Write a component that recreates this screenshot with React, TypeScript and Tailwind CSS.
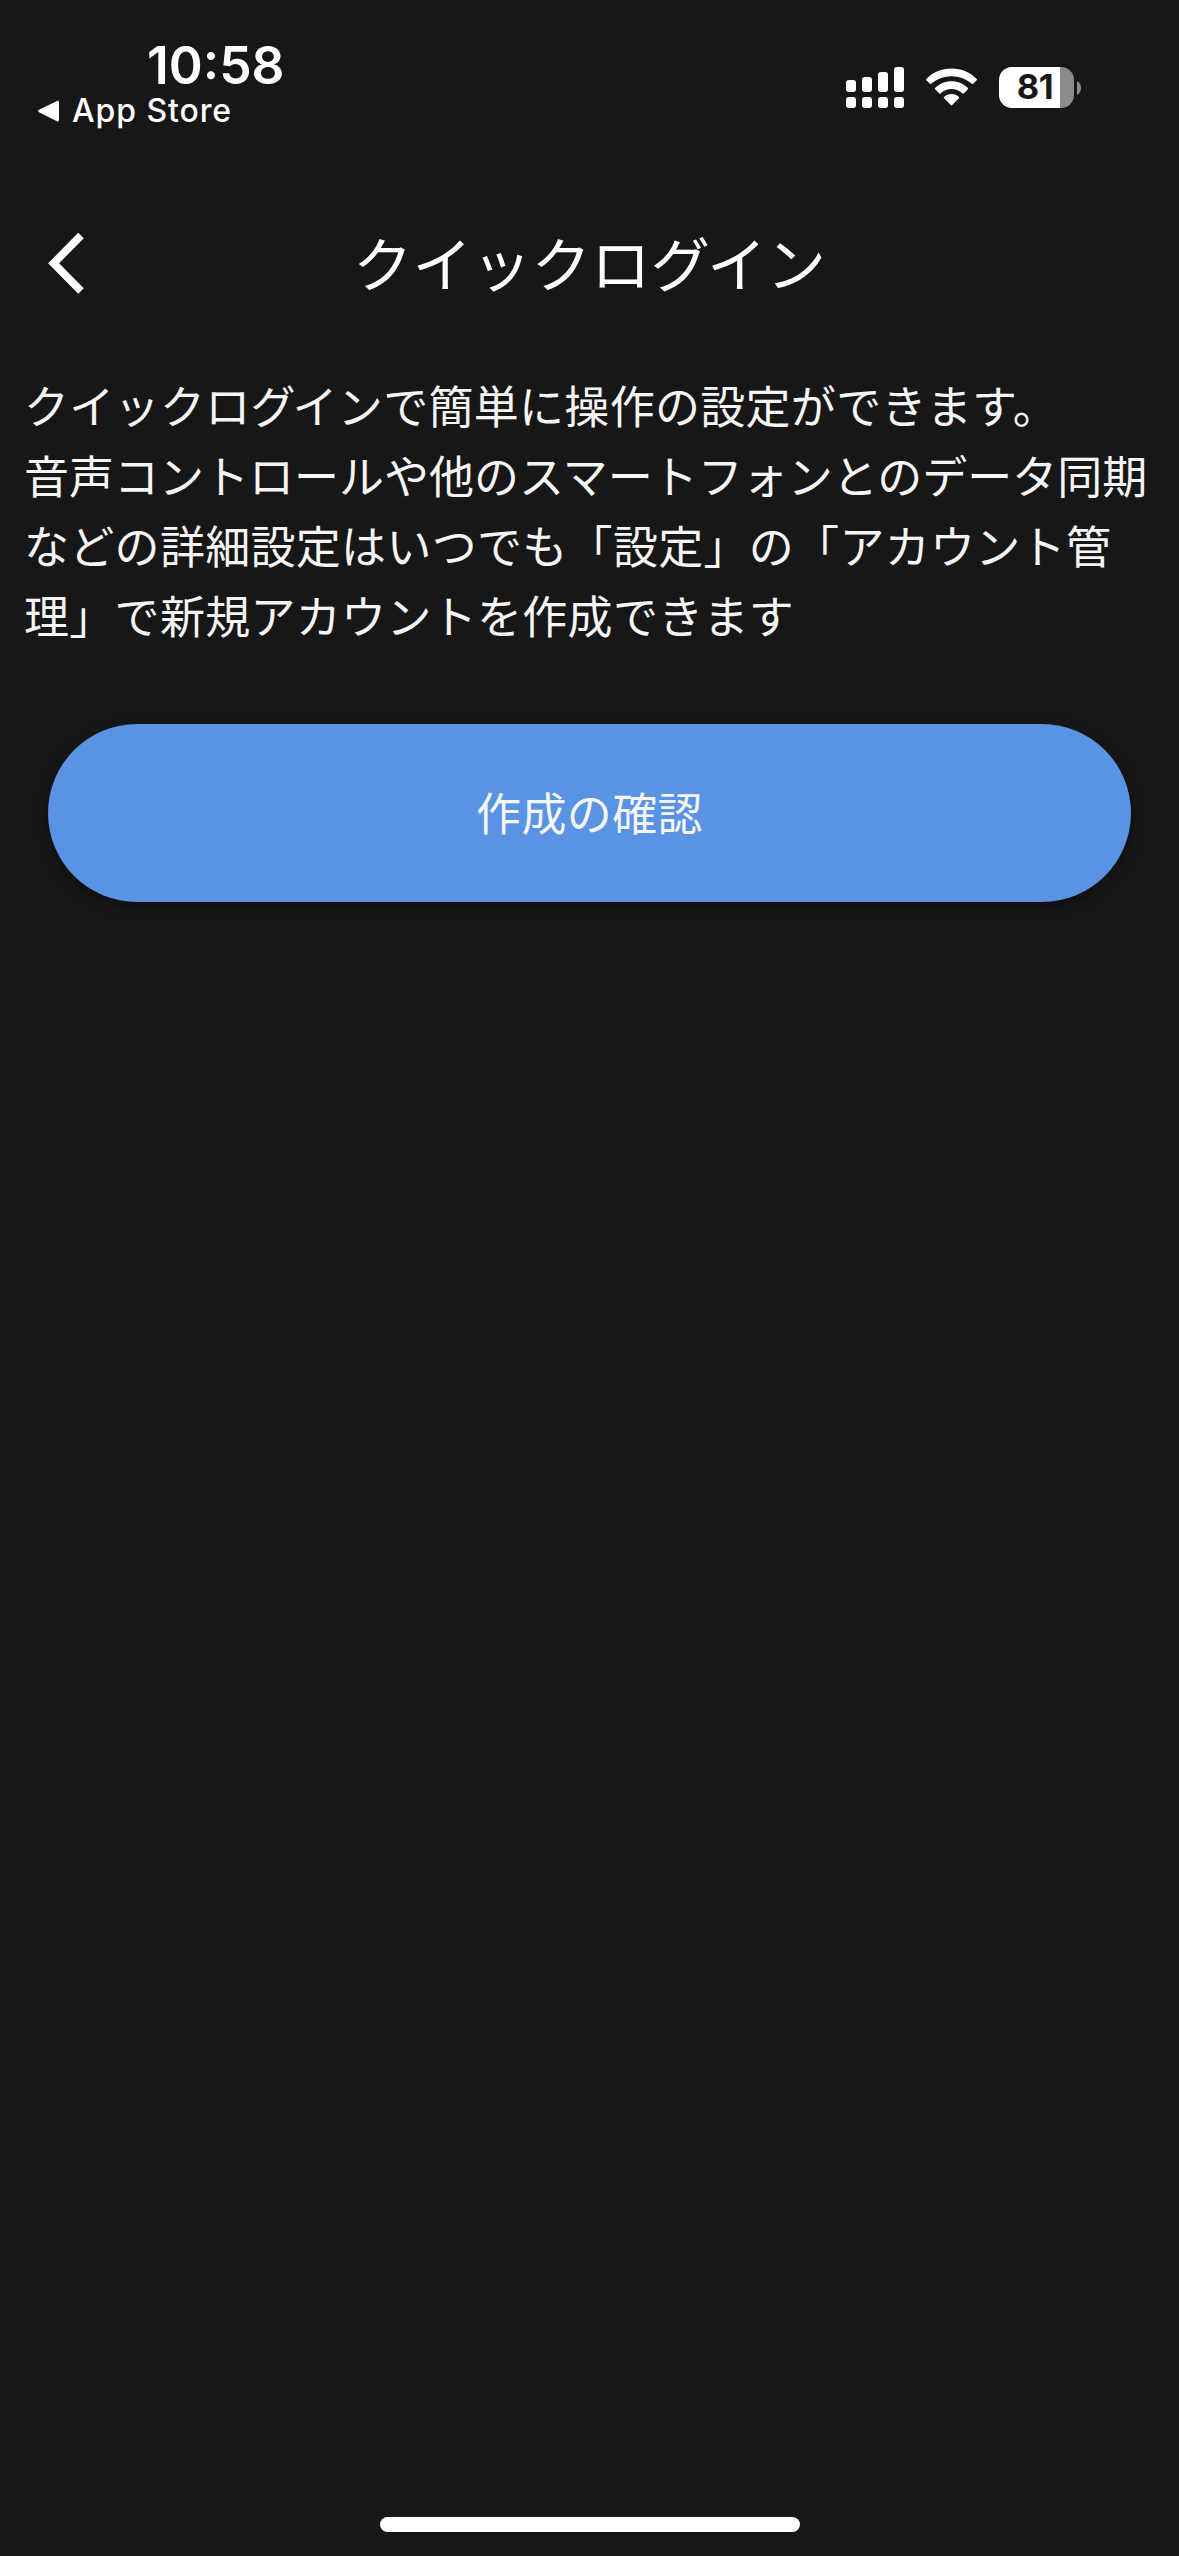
const bars = [
  { x: 0, y: 13, h: 12 },
  { x: 16, y: 10, h: 15 },
  { x: 32, y: 5, h: 20 },
  { x: 48, y: 0, h: 25 },
]

const StatusBar = () => (
  <header className="flex h-[145px] justify-between pt-[33px] pr-[98px] pl-[38px] font-['Inter',sans-serif]">
    <div className="flex flex-col">
      <time className="pl-[109px] text-[51.5px] leading-[64px] font-semibold">10:58</time>
      <div className="flex items-center gap-[12px]">
        <svg className="h-[22px] w-[22px]" viewBox="0 0 22 22" fill="#fff">
          <path d="M1 9.7 19 .9c1-.5 2 .1 2 1.200v18c0 1-1 1.700-2 1.200L1 12.300c-1.100-.6-1.100-2 0-2.600z" />
        </svg>
        <span className="text-[32px] leading-[28px] font-medium tracking-[0.9px]">App Store</span>
      </div>
    </div>
    <div className="flex h-[41px] pt-[34px]">
      <svg className="mr-[22px] h-[41px] w-[58px] shrink-0" viewBox="0 0 58 41" fill="#fff">
        {bars.map((bar) => (
          <g key={bar.x}>
            <rect x={bar.x} y={bar.y} width="10" height={bar.h} rx="3" />
            <rect x={bar.x} y="30" width="10" height="11" rx="3" />
          </g>
        ))}
      </svg>
      <svg className="mr-[22px] h-[41px] w-[51px] shrink-0" viewBox="0 0 51 41" fill="#fff">
        <path d="M25.500 1.500C35.500 1.500 44.500 5.500 50.700 12q.6.6 0 1.200l-3.600 3.600q-.6.6-1.200 0C40.500 12.300 33.300 9.300 25.500 9.300S10.500 12.300 5.100 16.800q-.6.6-1.200 0L.3 13.200q-.6-.6 0-1.200C6.500 5.500 15.500 1.500 25.500 1.500z" />
        <path d="M25.500 14.300c6.400 0 12.200 2.500 16.400 6.700q.6.6 0 1.200l-4.200 4.200q-.6.6-1.200 0c-3-2.700-6.700-4.300-11-4.300s-8 1.600-11 4.300q-.6.6-1.200 0l-4.200-4.200q-.6-.6 0-1.200c4.200-4.200 10-6.700 16.400-6.700z" />
        <path d="M25.500 27.100c2.900 0 5.500 1.100 7.500 2.900q.6.6 0 1.200l-6.800 6.900q-.7.700-1.400 0L18 31.200q-.6-.6 0-1.200c2-1.800 4.600-2.900 7.500-2.900z" />
      </svg>
      <div className="flex h-[41px] items-center gap-[3px]">
        <div className="flex h-[41px] w-[75px] items-center justify-center rounded-[13px] bg-linear-to-r from-white from-[61px] to-[#8b8b8b] to-[61px] pr-[3px] text-[34.5px] leading-none font-bold tracking-[-0.5px] text-[#171717]">
          81
        </div>
        <svg className="h-[14px] w-[4px]" viewBox="0 0 4 14" fill="#8b8b8b">
          <path d="M0 0c2.500 1.200 4 4 4 7s-1.500 5.800-4 7z" />
        </svg>
      </div>
    </div>
  </header>
)

const TitleBar = () => (
  <div className="grid h-[225px] grid-cols-[150px_1fr_150px] pt-[75px]">
    <button className="flex h-[88px] items-center pl-[48px]" aria-label="戻る">
      <svg className="h-[62px] w-[38px]" viewBox="0 0 38 62" fill="none" stroke="#fff" strokeWidth="7.800">
        <path d="M33 2.400 5.600 30.300 33 58" />
      </svg>
    </button>
    <h1 className="text-center text-[59.500px] leading-[82px] whitespace-nowrap">
      クイックロ<span className="tracking-[-3px]">グ</span>イン
    </h1>
  </div>
)

export default () => {
  return (
    <div className="flex h-[2556px] w-[1179px] flex-col bg-[#171717] font-['Noto_Sans_CJK_JP',sans-serif] text-white">
      <StatusBar />
      <TitleBar />
      <main className="flex grow flex-col">
        <p className="pl-[24px] text-[45px] leading-[70px] tracking-[0.3px] whitespace-nowrap text-[#f5f5f5]">
          クイックロ<span className="tracking-[-3px]">グ</span>インで簡単に操作の設定ができます。<br />
          <span className="tracking-normal">音声コントロールや他のスマートフォンとのデータ同期</span><br />
          などの詳細設定はいつでも「設定」の「アカウント管<br />
          理」で新規アカウントを作成できます
        </p>
        <button className="mx-[48px] mt-[74px] h-[178px] rounded-full bg-[#5a93e3] pb-[3px] text-[45px] tracking-[0.4px] text-[#f5f5f5] shadow-[0_4px_12px_rgba(0,0,0,0.35)]">
          作成の確認
        </button>
      </main>
      <footer className="flex justify-center pb-[24px]">
        <div className="h-[15px] w-[420px] rounded-full bg-white" />
      </footer>
    </div>
  )
}
